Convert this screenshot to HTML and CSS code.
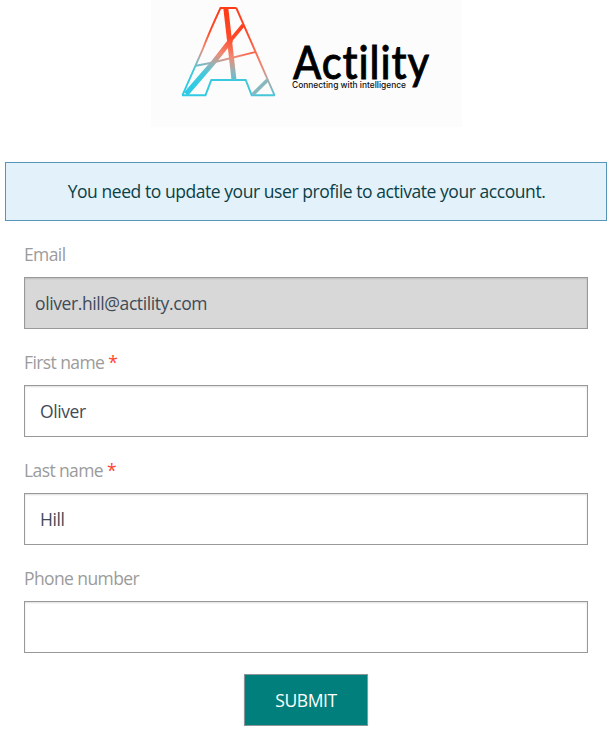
FILE: index.html
```html
<!DOCTYPE html>
<html lang="en">
<head>
<meta charset="utf-8">
<title>Actility – Update profile</title>
<link rel="stylesheet" href="styles.css">
</head>
<body>
<header class="logo">
<svg width="311" height="127" viewBox="151 0 311 127" role="img" aria-label="Actility">
  <defs>
    <linearGradient id="fade" gradientUnits="userSpaceOnUse" x1="239" y1="18" x2="215" y2="94">
      <stop offset="0" stop-color="#ff3c18"/>
      <stop offset=".28" stop-color="#ff4b2a"/>
      <stop offset=".5" stop-color="#f08b76"/>
      <stop offset=".67" stop-color="#8db5bb"/>
      <stop offset=".8" stop-color="#43c9dc"/>
      <stop offset="1" stop-color="#2fcbe5"/>
    </linearGradient>
    <linearGradient id="edge" gradientUnits="userSpaceOnUse" x1="245" y1="28" x2="275" y2="96">
      <stop offset="0" stop-color="#ff4020"/>
      <stop offset=".5" stop-color="#f87c62"/>
      <stop offset=".76" stop-color="#b9a9a5"/>
      <stop offset="1" stop-color="#4cc5d7"/>
    </linearGradient>
    <linearGradient id="base" gradientUnits="userSpaceOnUse" x1="182" y1="95" x2="275" y2="95">
      <stop offset="0" stop-color="#2bcbe6"/>
      <stop offset="1" stop-color="#4cc5d7"/>
    </linearGradient>
  </defs>
  <g fill="none" stroke="url(#fade)" stroke-width="1.9">
    <path d="M236.5 8H220.5C213 24 207 38 202 51L182.5 95.2"/>
    <path d="M182 95.2H205.5L211.3 80H245.7L251.7 95.2H275" stroke="url(#base)"/>
    <path d="M225.8 8L234 80" stroke-width="5"/>
    <path d="M243.3 25L230 41" stroke-width="3.6"/>
    <path d="M231 40L213 63L186 94" stroke-width="5"/>
    <path d="M196 65.8L213 62.5L255 52.2"/>
    <path d="M236.3 8L274.5 95.2" stroke="url(#edge)"/>
    <path d="M267.5 80L252.8 94.5" stroke="#85b8bf" stroke-width="3.6"/>
  </g>
  <text class="logo-name" x="293" y="78.5" textLength="137" lengthAdjust="spacingAndGlyphs">Actility</text>
  <text class="logo-tag" x="292" y="88" textLength="114" lengthAdjust="spacingAndGlyphs">Connecting with intelligence</text>
</svg>
</header>
<p class="notice"><span>You need to update your user profile to activate your account.</span></p>
<form class="profile">
  <label for="email">Email</label>
  <input class="readonly" id="email" value="oliver.hill@actility.com" readonly>
  <label for="first">First name <span class="required">*</span></label>
  <input id="first" value="Oliver">
  <label for="last">Last name <span class="required">*</span></label>
  <input id="last" value="Hill">
  <label for="phone">Phone number</label>
  <input id="phone" type="tel">
  <button type="button">SUBMIT</button>
</form>
</body>
</html>
```
FILE: styles.css
```css
* { box-sizing: border-box; }
body {
  margin: 0;
  background: #fff;
  font: 17.5px/24px "Open Sans", "Noto Sans", sans-serif;
}
.logo {
  width: 311px;
  height: 127px;
  margin-left: 151px;
  background: #fcfcfc;
}
.logo svg { display: block; }
.logo-name {
  font: 500 46px Lato, sans-serif;
  font-variant-ligatures: none;
  letter-spacing: 1px;
  fill: #000;
  stroke: #000;
  stroke-width: .8px;
}
.logo-tag { font: 500 8.5px Inter, sans-serif; fill: #111; }
.notice {
  width: 602px;
  height: 59px;
  margin: 35px 0 0 5px;
  padding: 16px 0 0 1px;
  border: 1px solid #5596b8;
  background: #e3f2fa;
  color: #0b4047;
  text-align: center;
  white-space: nowrap;
  letter-spacing: -.44px;
}
.profile {
  display: flex;
  flex-direction: column;
  width: 564px;
  margin: 21px 0 0 24px;
}
label {
  height: 35px;
  color: #9b9b9b;
  letter-spacing: -.6px;
}
.required { color: #ff4330; }
input {
  width: 100%;
  height: 52px;
  margin: 0 0 21px;
  padding: 0 15px;
  border: 1px solid #999;
  border-radius: 0;
  outline: 0;
  background: #fff;
  box-shadow: inset 0 1px 2px #0002;
  color: #3f4b57;
  font: inherit;
  letter-spacing: -.4px;
}
input.readonly { padding: 0 10px; background: #d8d8d8; }
button {
  align-self: center;
  width: 124px;
  height: 52px;
  padding: 0;
  border: 1px solid #8d9696;
  background: #007f7c;
  box-shadow: 0 1px 2px #0002;
  color: #fff;
  font: inherit;
  letter-spacing: -.4px;
}
```
